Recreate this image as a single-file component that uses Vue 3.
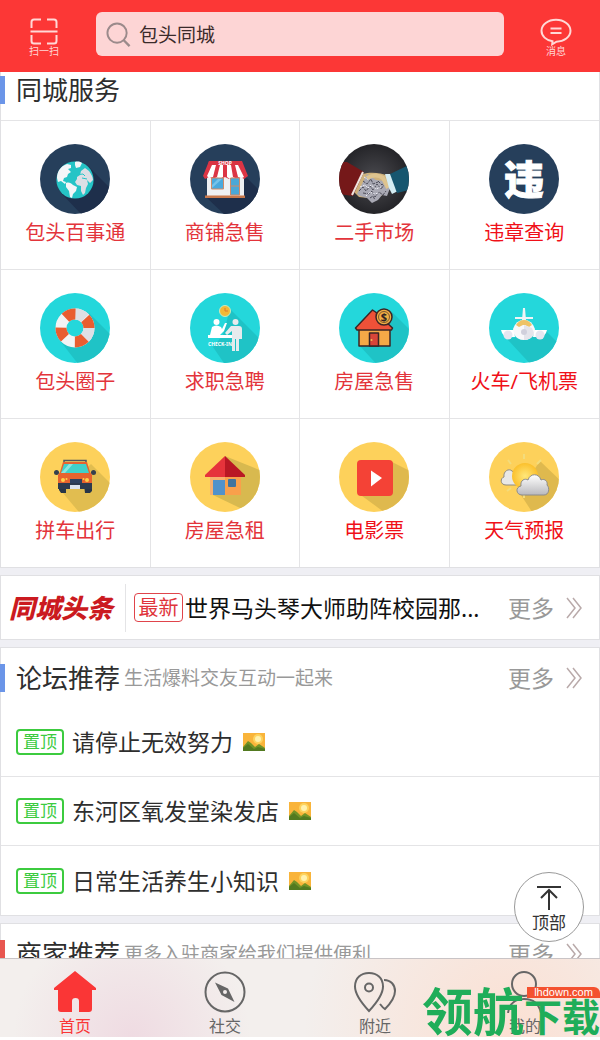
<template>
  <div class="page">
    <header class="top-bar">
      <button class="top-action" type="button">
        <svg class="scan-icon" viewBox="0 0 28 28" fill="none" stroke="currentColor" stroke-width="2">
          <path d="M1.500 10V4q0-2.500 2.500-2.500H11M17 1.500h7q2.500 0 2.500 2.500v6M1.500 17v6q0 2.500 2.500 2.500H11M17 25.500h7q2.500 0 2.500-2.500v-6M.5 13.500h27" />
        </svg>
        <span>扫一扫</span>
      </button>
      <label class="search">
        <svg class="search-icon" viewBox="0 0 26 26" fill="none" stroke="#9b8a8b" stroke-width="2">
          <circle cx="11.500" cy="11.500" r="10" />
          <path d="M18.500 19l6 6" stroke-width="2.500" />
        </svg>
        <input v-model="keyword" type="text" aria-label="搜索" />
      </label>
      <button class="top-action" type="button">
        <svg class="message-icon" viewBox="0 0 32 28" fill="none" stroke="currentColor" stroke-width="2">
          <path d="M12.500 23.300C6 22.300 1.500 18 1.500 12.800 1.500 6.600 8 1.800 16 1.800s14.500 4.800 14.500 11S24 23.700 16.500 23.700l-4.300 2.600z" />
          <path d="M10.500 10.500h11M10.500 15h11" />
        </svg>
        <span>消息</span>
      </button>
    </header>

    <main class="content">
      <section class="card services">
        <div class="card-head">
          <h2>同城服务</h2>
        </div>
        <nav class="service-grid">
          <a v-for="item in services" :key="item.icon" href="#" class="service" :class="{ hot: item.hot }">
            <svg class="service-icon" viewBox="0 0 70 70">
              <defs>
                <clipPath :id="'clip-' + item.icon"><circle cx="35" cy="35" r="35" /></clipPath>
                <radialGradient id="dark-disc"><stop offset="0" stop-color="#4b4b50" /><stop offset="1" stop-color="#242428" /></radialGradient>
                <linearGradient id="cloud" x1="0" y1="0" x2="0" y2="1"><stop offset="0" stop-color="#fff" /><stop offset="1" stop-color="#b9b9bd" /></linearGradient>
                <radialGradient id="sun"><stop offset="0" stop-color="#ffe77a" /><stop offset="1" stop-color="#fbc02c" /></radialGradient>
              </defs>
              <circle cx="35" cy="35" r="35" :fill="item.bg" />
              <g :clip-path="'url(#clip-' + item.icon + ')'">
                <g v-if="item.icon === 'globe'">
                  <path d="M48 22L72 46V72H43L21 49z" fill="#1e2f4b" />
                  <circle cx="35" cy="36" r="18.600" fill="#25c4c6" />
                  <path d="M17 34c0-7 4-12 10-14l4 1 0 3-3 1 3 3-3 2-1 3-3 1-1 3 3 1-1 2-4-3-3 1zM35 18c3-1 6 0 7 1l-2 4-4 1-1-3zM26 39c3-1 5 0 7 2l4 2-1 4-3 3-1 4-2-1-1-6-3-4z" fill="#f4f6f8" />
                  <path d="M37 33l3-2 1-4 4-3 4 3c2 3 4 6 4 9l-3 3-3-3 1 4-2 4-1 5-2 2-2-4 0-5-4-1-2-3 2-3z" fill="#dcdfe5" />
                  <path d="M39 30.500l4-.5 2 2M42 34l5 1" stroke="#25c4c6" stroke-width="1" fill="none" />
                </g>

                <g v-else-if="item.icon === 'shop'">
                  <path d="M57 34L72 49V72H36L17 54z" fill="#1e2f4b" />
                  <path d="M17 30h37v22H17z" fill="#eef0f3" />
                  <path d="M15 51.500h40v2.500H15z" fill="#c8794c" />
                  <path d="M19 17h33l6 15-4 3-3-2-4 2-4-2-4 2-4-2-4 2-4-2-4 2-4-2-4 2-2-3z" fill="#dc3545" />
                  <path d="M22 21h4l-3 12-4 1-2-2zM30 21h3v12l-3 2-3-2zM37 21h4l2 12-3 2-3-2zM45 21h3l6 12-2 1-4-1z" fill="#fff" />
                  <path d="M19 17h33v4H18z" fill="#d93443" />
                  <text x="35" y="21" text-anchor="middle" font-size="5" font-weight="700" fill="#fff">SHOP</text>
                  <path d="M21.500 34h12v11h-12z" fill="#49a9dd" stroke="#cf8b68" />
                  <path d="M22 44l10-9h-4l-6 6z" fill="#75c3ea" />
                  <path d="M40.500 34h9v17h-9z" fill="#4aa8d8" stroke="#cf8b68" />
                  <path d="M40.500 42h9" stroke="#cf8b68" />
                </g>

                <g v-else-if="item.icon === 'hands'">
                  <path d="M24 30c6-2 17-2 25 2l2 13-13 10-18-2-6-6z" fill="#cfb27c" />
                  <path d="M18 50l10-20 9 6 9 1 5 7-3 8-5-1-4 5-6 3-5-5-7-2z" fill="#a9a9b4" />
                  <path d="M20 47l4-4 3 4 4-5 3 4 4-6 4 5 3-4M24 37l4 3 4-5 2 5 5-2M24 49l6 1 3-3 3 6 4-5 4 3 3-4M31 54l3-2 2 4M39 37l4 4 2-3" fill="none" stroke="#4d4d59" stroke-width="1" stroke-dasharray="3 1" />
                  <path d="M21 43l5-2 3 3 3-3 5 4 5-2M25 33l5 3M27 52l4-4 4 2 5-1" fill="none" stroke="#eeeef5" stroke-width="1" stroke-dasharray="2 1" />
                  <path d="M28 34q9-5 16 0l5 10" fill="none" stroke="#dec48f" stroke-width="4" />
                  <path d="M0 18l8 0 17 10-11 24-14-2z" fill="#751819" />
                  <path d="M24 28L13 51" stroke="#efe5df" stroke-width="2" />
                  <path d="M46 30h8l5 17-6 3-3-6z" fill="#d5edf3" />
                  <path d="M51 30l19-9v25l-12 3z" fill="#16566f" />
                </g>

                <g v-else-if="item.icon === 'violation'">
                  <text x="35" y="50" text-anchor="middle" font-size="40" font-weight="900" fill="#fff" stroke="#fff" stroke-width="1">违</text>
                </g>

                <g v-else-if="item.icon === 'ring'">
                  <path d="M49 20L76 47V76H42L21 49z" fill="#1fc3c6" />
                  <circle cx="35" cy="35" r="9" fill="#24d7db" />
                  <circle cx="35" cy="35" r="14" fill="none" stroke="#f3f3f4" stroke-width="11" />
                  <path d="M35 15.500a19.500 19.500 0 0 1 13.800 5.700L41 29a8.500 8.500 0 0 0-6-2.500zM54.500 35a19.500 19.500 0 0 1-5.700 13.800L41 41a8.500 8.500 0 0 0 2.500-6z" fill="#dedfe5" />
                  <circle cx="35" cy="35" r="14" fill="none" stroke="#e95d30" stroke-width="11" stroke-dasharray="11" stroke-dashoffset="11" />
                </g>

                <g v-else-if="item.icon === 'jobs'">
                  <path d="M40 16L76 52V76H38L23 54l10-12z" fill="#1fc3c6" />
                  <circle cx="35" cy="18" r="5.500" fill="#f3b935" stroke="#c8e9bf" stroke-width="1" />
                  <path d="M35 15v3h3" stroke="#e0792c" stroke-width="1" fill="none" />
                  <g fill="#fff">
                    <circle cx="26.500" cy="29" r="3" />
                    <path d="M22 34q4-3 9 0l1 2 3-6h2l-3 8-4 4H20z" />
                    <path d="M18 42h24v3H18z" />
                  </g>
                  <text x="18" y="53" font-size="5" font-weight="700" fill="#fff">CHECK-IN</text>
                  <g fill="#e6ebed">
                    <circle cx="45.500" cy="29" r="3" />
                    <path d="M41 33h8q3 0 3 3v10h-3v12h-3V46h-1v12h-3V38l-5 4-2-2z" />
                  </g>
                </g>

                <g v-else-if="item.icon === 'sale'">
                  <path d="M52 18L76 42V76H42L20 52z" fill="#1fc3c6" />
                  <g stroke="#3b2525" stroke-width="1.500" stroke-linejoin="round">
                    <path d="M20 35h31v18H20z" fill="#f5a947" />
                    <path d="M16.500 35l17-18 3 2 17 16-1 2H18z" fill="#ee5138" />
                    <circle cx="45" cy="24" r="8" fill="#eead42" />
                    <path d="M30.500 40h9v13h-9z" fill="#d94539" />
                  </g>
                  <circle cx="45" cy="24" r="5.500" fill="none" stroke="#7d5530" stroke-width="1" />
                  <text x="45" y="28" text-anchor="middle" font-size="11" font-weight="700" fill="#312222">$</text>
                  <circle cx="32.500" cy="47" r="1" fill="#f2bd54" />
                </g>

                <g v-else-if="item.icon === 'plane'">
                  <path d="M57 38L76 57V76H46L18 46z" fill="#1fc3c6" />
                  <path d="M34 15h2l1 12-2 4-2-4zM26 24h18v2H26z" fill="#eff4f6" />
                  <path d="M12 37h13l1 7h-4q-3 4-6 0l-3-4zM58 37H45l-1 7h4q3 4 6 0l3-4z" fill="#fff" />
                  <circle cx="19" cy="42" r="4.500" fill="#e5e6f0" /><circle cx="51" cy="42" r="4.500" fill="#e5e6f0" />
                  <path d="M24 36q3-9 11-9t11 9l-1 5q-3 6-10 6t-10-6z" fill="#f8f8fa" />
                  <path d="M27 32q3-5 8-5t8 5l-3 2-4-2h-2l-4 2z" fill="#eec367" />
                  <path d="M35 32v15q8 0 10-7l-2-5z" fill="#e4e4eb" />
                  <circle cx="35" cy="39" r="3" fill="#d0d0dc" />
                </g>

                <g v-else-if="item.icon === 'car'">
                  <path d="M51 22L76 47V76H44L22 50z" fill="#e1bd50" />
                  <path d="M24 21v-2.500h22V21" fill="none" stroke="#4f5862" stroke-width="1.500" />
                  <path d="M19 43h7v8h-5l-2-3zM44 43h8v6l-2 2h-5z" fill="#273548" />
                  <circle cx="16.500" cy="30.500" r="2.500" fill="#34404e" /><circle cx="53.500" cy="30.500" r="2.500" fill="#34404e" />
                  <path d="M23 20h24l3 10 2 3v12H18V33l2-3z" fill="#e7632e" />
                  <path d="M24 22h22l3 9H21z" fill="#41d1c9" />
                  <path d="M23 29l6-7h4l-8 9h-4z" fill="#8be6df" />
                  <path d="M18 41h12l2-4h8l2 4h10v6H18z" fill="#2c3a4e" />
                  <path d="M30 37h12v4H30z" fill="#2d415f" />
                  <path d="M30 43h10v4H30z" fill="#dbe4ee" />
                  <g fill="#ffd04a"><circle cx="23" cy="38" r="2" /><circle cx="47" cy="38" r="2" /><circle cx="26.500" cy="37" r="1" /><circle cx="43.500" cy="37" r="1" /></g>
                </g>

                <g v-else-if="item.icon === 'rent'">
                  <path d="M35 14l37 15v37H50L23 53z" fill="#d8b94f" />
                  <path d="M20 34h31v19H20z" fill="#f7b16e" /><path d="M35 34h16v19H35z" fill="#f9a04b" />
                  <path d="M35 14L15 33v2h20z" fill="#e6333b" /><path d="M35 14l20 19v2H35z" fill="#b91824" />
                  <path d="M23 38h12v15H23z" fill="#5292ca" /><rect x="38" y="37" width="8" height="8" rx="1" fill="#41749e" />
                </g>

                <g v-else-if="item.icon === 'movie'">
                  <path d="M53 20l20 10v43H49L19 51z" fill="#dfb94e" />
                  <rect x="18" y="18" width="36" height="36" rx="4" fill="#f44236" />
                  <path d="M32 28.500v16L43 36z" fill="#fff" />
                </g>

                <g v-else>
                  <path d="M51 19l25 24v33H47L30 50z" fill="#dfb94e" />
                  <path d="M35 12v5M19 18l3 4M52 18l-4 4M18 49l4-3M35 51v5" stroke="#f3dc7c" stroke-width="2" />
                  <path d="M17 43c-6 0-6-7-2-8-1-6 5-9 8-6l6 4v10z" fill="#e9e8e5" stroke="#8f8b7f" stroke-width="1" />
                  <circle cx="36" cy="34" r="13" fill="url(#sun)" />
                  <path d="M33 53c-6 0-7-8-1-9-1-6 4-8 7-6 2-7 11-7 13 0 4-2 7 2 6 5 3 3 2 10-3 10z" fill="url(#cloud)" stroke="#8c8c8c" stroke-width="1" />
                </g>
              </g>
            </svg>
            <span class="service-name">{{ item.name }}</span>
          </a>
        </nav>
      </section>

      <section class="card news">
        <h2 class="news-logo">同城头条</h2>
        <a href="#" class="news-link">
          <span class="tag tag-new">最新</span>
          <span class="news-title">世界马头琴大师助阵校园那...</span>
        </a>
        <a href="#" class="more">
          <span>更多</span>
          <svg class="more-icon" viewBox="0 0 17 22" fill="none" stroke="#b9aaaa" stroke-width="1.500">
            <path d="M1 1l8 10-8 10M7 1l8 10-8 10" />
          </svg>
        </a>
      </section>

      <section class="card">
        <div class="card-head">
          <h2>论坛推荐</h2>
          <p>生活爆料交友互动一起来</p>
          <a href="#" class="more">
            <span>更多</span>
            <svg class="more-icon" viewBox="0 0 17 22" fill="none" stroke="#b9aaaa" stroke-width="1.500">
              <path d="M1 1l8 10-8 10M7 1l8 10-8 10" />
            </svg>
          </a>
        </div>
        <ul class="posts">
          <li v-for="post in posts" :key="post">
            <a href="#" class="post">
              <span class="tag tag-top">置顶</span>
              <span class="post-title">{{ post }}</span>
              <svg class="photo-icon" viewBox="0 0 22 18">
                <path d="M0 0h22v18H0z" fill="#f9b43a" />
                <circle cx="15" cy="6" r="5" fill="#fdd35e" />
                <circle cx="15" cy="6" r="3" fill="#fff1ad" />
                <path d="M0 14l5-6 3 2 4 4 4-3 6 4v3H0z" fill="#719326" />
                <path d="M0 15l5-4 6 5 4-2 7 2v2H0z" fill="#527a20" />
              </svg>
            </a>
          </li>
        </ul>
      </section>

      <section class="card">
        <div class="card-head red">
          <h2>商家推荐</h2>
          <p>更多入驻商家给我们提供便利</p>
          <a href="#" class="more">
            <span>更多</span>
            <svg class="more-icon" viewBox="0 0 17 22" fill="none" stroke="#b9aaaa" stroke-width="1.500">
              <path d="M1 1l8 10-8 10M7 1l8 10-8 10" />
            </svg>
          </a>
        </div>
      </section>
    </main>

    <button class="to-top" type="button">
      <svg class="to-top-icon" viewBox="0 0 24 26" fill="none" stroke="currentColor" stroke-width="2">
        <path d="M0 2h24M12 25V5M4 13l8-8 8 8" />
      </svg>
      <span>顶部</span>
    </button>

    <nav class="tab-bar">
      <a
        v-for="tab in tabs"
        :key="tab.id"
        href="#"
        class="tab"
        :class="{ active: tab.id === activeTab }"
        @click.prevent="activeTab = tab.id"
      >
        <svg class="tab-icon" viewBox="0 0 42 42" fill="none" stroke="currentColor" stroke-width="2">
          <path v-if="tab.id === 'home'" d="M21 0l21 17v2h-4v19q0 3-3 3H25V30q0-3-3.500-3T18 30v11H7q-3 0-3-3V19H0v-2z" fill="currentColor" stroke="none" />
          <template v-else-if="tab.id === 'social'">
            <circle cx="21" cy="21" r="19.500" />
            <path d="M11 11.500l13 6L30.500 31l-13-7zM19 21a2 2 0 1 0 4 0 2 2 0 1 0-4 0" fill="currentColor" fill-rule="evenodd" stroke="none" />
          </template>
          <template v-else-if="tab.id === 'near'">
            <path d="M15 40Q1 25 1 15.500C1 7 7 2 15 2s14 5 14 13.500Q29 25 15 40z" />
            <circle cx="15" cy="16.500" r="4" />
            <path d="M30 9c7 0 11 5 11 11 0 7-4 12-10 18q-2-1-5-5" />
          </template>
          <template v-else>
            <circle cx="20" cy="13" r="12" />
            <path d="M4 42q2-14 16-14t17 14" />
          </template>
        </svg>
        <span>{{ tab.name }}</span>
      </a>
    </nav>

    <div class="site-mark">
      <span class="mark-big">领航</span><span class="mark-small">下载</span>
      <span class="mark-domain">lhdown.com</span>
    </div>
  </div>
</template>

<script setup>
import { ref } from 'vue';

const keyword = ref('包头同城');
const activeTab = ref('home');

const services = [
  { icon: 'globe', name: '包头百事通', bg: '#263f5b' },
  { icon: 'shop', name: '商铺急售', bg: '#263f5b' },
  { icon: 'hands', name: '二手市场', bg: 'url(#dark-disc)' },
  { icon: 'violation', name: '违章查询', bg: '#263f5b', hot: true },
  { icon: 'ring', name: '包头圈子', bg: '#24d7db' },
  { icon: 'jobs', name: '求职急聘', bg: '#24d7db' },
  { icon: 'sale', name: '房屋急售', bg: '#24d7db' },
  { icon: 'plane', name: '火车/飞机票', bg: '#24d7db', hot: true },
  { icon: 'car', name: '拼车出行', bg: '#fdd15b' },
  { icon: 'rent', name: '房屋急租', bg: '#fdd15b' },
  { icon: 'movie', name: '电影票', bg: '#fdd15b', hot: true },
  { icon: 'weather', name: '天气预报', bg: '#fdd15b', hot: true }
];

const posts = ['请停止无效努力', '东河区氧发堂染发店', '日常生活养生小知识'];

const tabs = [
  { id: 'home', name: '首页' },
  { id: 'social', name: '社交' },
  { id: 'near', name: '附近' },
  { id: 'mine', name: '我的' }
];
</script>

<style>
body {
  background: #fff;
}
</style>

<style scoped>
.page {
  position: relative;
  display: flex;
  flex-direction: column;
  height: 100vh;
  overflow: hidden;
  box-sizing: border-box;
  padding-bottom: 3px;
  font-family: "Noto Sans", "Noto Sans CJK SC", sans-serif;
  color: #2e2e2e;
}

.page *,
.page *::before {
  box-sizing: border-box;
}

a {
  color: inherit;
  text-decoration: none;
}

button {
  border: none;
  padding: 0;
  font-family: inherit;
  cursor: pointer;
}

h2,
p,
ul {
  margin: 0;
  padding: 0;
  font-weight: normal;
  list-style: none;
}

.top-bar {
  flex: none;
  display: grid;
  grid-template-columns: 88px 1fr 88px;
  gap: 8px;
  height: 72px;
  padding: 12px 0 16px;
  background: #fc3736;
}

.top-action {
  display: flex;
  flex-direction: column;
  align-items: center;
  justify-content: flex-end;
  background: none;
  color: #ffd8d6;
  font-size: 10px;
  line-height: 10px;
}

.scan-icon {
  width: 28px;
  height: 28px;
}

.message-icon {
  width: 32px;
  height: 28px;
}

.search {
  display: flex;
  align-items: center;
  gap: 8px;
  min-width: 0;
  padding: 0 10px;
  border-radius: 6px;
  background: #fdd5d5;
}

.search-icon {
  flex: none;
  width: 25px;
  height: 25px;
}

.search input {
  flex: 1;
  min-width: 0;
  border: none;
  outline: none;
  padding: 0;
  background: none;
  font-family: inherit;
  font-size: 19px;
  color: #3a2a2a;
}

.content {
  flex: 1;
  min-height: 0;
  overflow: hidden;
  background: #efeff4;
}

.card {
  margin-bottom: 7px;
  border: 1px solid #e0e0e3;
  background: #fff;
}

/* the list is scrolled a little under the top bar */
.services {
  margin-top: -13px;
}

.card-head {
  position: relative;
  display: flex;
  align-items: center;
  gap: 4px;
  height: 60px;
  padding: 0 16px 0 15px;
}

.card-head::before {
  content: "";
  position: absolute;
  left: -1px;
  width: 5px;
  height: 28px;
  background: #6b95e8;
}

.card-head.red::before {
  background: #e85650;
}

.card-head h2 {
  font-size: 26px;
  line-height: 36px;
}

.card-head p {
  font-size: 19px;
  line-height: 28px;
  color: #999;
}

.more {
  flex: none;
  display: flex;
  align-items: center;
  gap: 12px;
  margin-left: auto;
  font-size: 23px;
  line-height: 32px;
  color: #999;
}

.more-icon {
  width: 17px;
  height: 22px;
}

.service-grid {
  display: grid;
  grid-template-columns: repeat(4, 1fr);
}

.service {
  display: flex;
  flex-direction: column;
  align-items: center;
  height: 149px;
  padding-top: 23px;
  border-top: 1px solid #e4e4e6;
  color: #e3343b;
}

.service:not(:nth-child(4n)) {
  border-right: 1px solid #e4e4e6;
}

.service.hot {
  color: #f01018;
}

.service-icon {
  width: 70px;
  height: 70px;
}

.service-name {
  margin-top: 7px;
  font-size: 20px;
  line-height: 24px;
  white-space: nowrap;
}

.news {
  display: flex;
  align-items: center;
  height: 65px;
  padding-right: 16px;
}

.news-logo {
  flex: none;
  width: 125px;
  padding-left: 8px;
  border-right: 1px solid #e4e4e6;
  font-size: 26px;
  font-style: italic;
  font-weight: 900;
  line-height: 48px;
  white-space: nowrap;
  color: #cb1a20;
}

.news-link {
  flex: 1;
  display: flex;
  align-items: center;
  gap: 2px;
  min-width: 0;
  padding: 0 8px;
}

.tag {
  flex: none;
  border-radius: 4px;
  text-align: center;
}

.tag-new {
  width: 49px;
  border: 1px solid #e0444b;
  font-size: 20px;
  line-height: 27px;
  color: #e0343b;
}

.news-title {
  overflow: hidden;
  text-overflow: ellipsis;
  white-space: nowrap;
  font-size: 23px;
  line-height: 32px;
  color: #111;
}

.post {
  display: flex;
  align-items: center;
  height: 69px;
  padding: 0 15px;
  border-bottom: 1px solid #e4e4e6;
}

.posts li:last-child .post {
  border-bottom: none;
}

.tag-top {
  width: 48px;
  border: 2px solid #3ccb3f;
  font-size: 17px;
  line-height: 22px;
  color: #3ccb3f;
}

.post-title {
  margin: 0 10px 0 8px;
  font-size: 23px;
  line-height: 32px;
}

.photo-icon {
  width: 22px;
  height: 18px;
}

.to-top {
  position: absolute;
  right: 16px;
  bottom: 98px;
  display: flex;
  flex-direction: column;
  align-items: center;
  justify-content: center;
  width: 70px;
  height: 70px;
  padding-top: 6px;
  border: 1px solid #999;
  border-radius: 50%;
  background: #fff;
  color: #333;
  font-size: 17px;
  line-height: 24px;
}

.to-top-icon {
  width: 24px;
  height: 26px;
}

.tab-bar {
  flex: none;
  display: grid;
  grid-template-columns: repeat(4, 1fr);
  height: 79px;
  border-top: 1px solid #c9c4c6;
  background:
    radial-gradient(circle at 22% 100%, #efdbe2 0, transparent 25%),
    radial-gradient(circle at 85% 90%, #fbe0d3 0, transparent 40%),
    #f3efed;
}

.tab {
  display: flex;
  flex-direction: column;
  align-items: center;
  gap: 3px;
  padding-top: 12px;
  font-size: 16px;
  line-height: 20px;
  color: #666;
}

.tab.active {
  color: #fa3636;
}

.tab-icon {
  width: 42px;
  height: 42px;
}

.site-mark {
  position: absolute;
  right: 0;
  bottom: 1px;
  display: flex;
  align-items: flex-end;
  font-weight: 700;
  color: #1fad59;
  white-space: nowrap;
  pointer-events: none;
}

.mark-big {
  font-size: 51px;
  line-height: 56px;
}

.mark-small {
  font-size: 38px;
  line-height: 46px;
}

.mark-domain {
  position: absolute;
  top: 4px;
  right: 0;
  width: 73px;
  border-radius: 0 6px 0 0;
  background: #f4512f;
  color: #fff;
  font-family: "Liberation Sans", sans-serif;
  font-size: 11px;
  font-weight: normal;
  line-height: 11px;
  text-align: center;
}
</style>
